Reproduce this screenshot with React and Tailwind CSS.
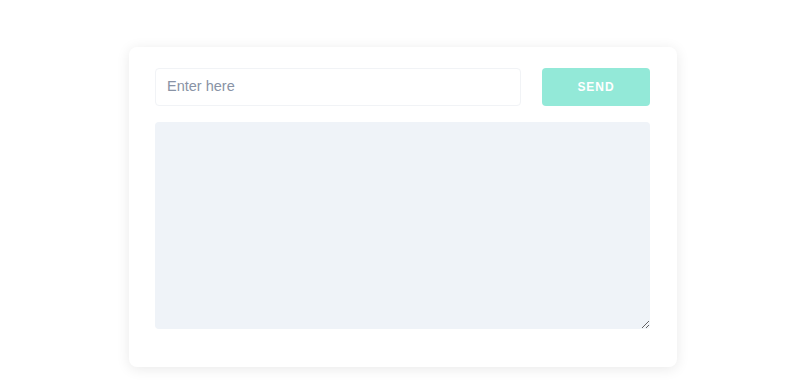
export default function App() {
  return (
    <div className="min-h-screen bg-white pt-[47px] font-['Liberation_Sans',Arial,sans-serif]">
      <div className="ml-[129px] w-[548px] h-[320px] rounded-lg bg-white shadow-[0_2px_14px_rgba(0,0,0,0.09)] pt-[21px] px-[26px]">
        <div className="flex gap-[21px]">
          <input
            type="text"
            placeholder="Enter here"
            className="w-[366px] h-[38px] rounded border border-[#f1f3f6] px-[11px] pb-[2px] text-[14.5px] text-gray-700 placeholder:text-[#8993a5] outline-none"
          />
          <button className="w-[108px] h-[38px] rounded bg-[#93e9d8] text-white text-[12px] font-bold tracking-[0.08em]">
            SEND
          </button>
        </div>
        <textarea className="mt-4 block w-[495px] h-[207px] rounded bg-[#eff3f8] outline-none resize" />
      </div>
    </div>
  )
}
